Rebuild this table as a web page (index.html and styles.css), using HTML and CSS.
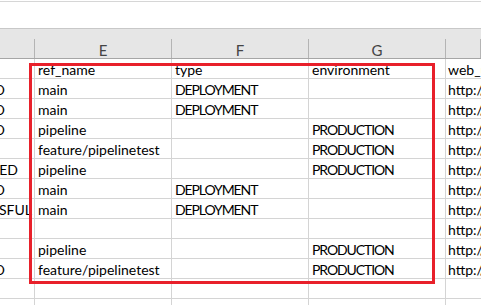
FILE: index.html
```html
<!DOCTYPE html>
<html lang="en">
<head>
    <meta charset="UTF-8">
    <title>deployments.xlsx</title>
    <link rel="stylesheet" href="styles.css">
</head>
<body>

<div class="sheet">
    <div class="formula-strip"></div>

    <div class="col-heads">
        <div class="head"></div>
        <div class="head">E</div>
        <div class="head">F</div>
        <div class="head">G</div>
        <div class="head"></div>
    </div>

    <div class="row">
        <div class="cell cut"></div>
        <div class="cell">ref_name</div>
        <div class="cell">type</div>
        <div class="cell">environment</div>
        <div class="cell">web_url</div>
    </div>
    <div class="row">
        <div class="cell cut end-d">SUCCEEDED</div>
        <div class="cell">main</div>
        <div class="cell caps">DEPLOYMENT</div>
        <div class="cell"></div>
        <div class="cell">http://</div>
    </div>
    <div class="row">
        <div class="cell cut end-d">SUCCEEDED</div>
        <div class="cell">main</div>
        <div class="cell caps">DEPLOYMENT</div>
        <div class="cell"></div>
        <div class="cell">http://</div>
    </div>
    <div class="row">
        <div class="cell cut end-d">SUCCEEDED</div>
        <div class="cell">pipeline</div>
        <div class="cell"></div>
        <div class="cell caps">PRODUCTION</div>
        <div class="cell">http://</div>
    </div>
    <div class="row">
        <div class="cell cut"></div>
        <div class="cell">feature/pipelinetest</div>
        <div class="cell"></div>
        <div class="cell caps">PRODUCTION</div>
        <div class="cell">http://</div>
    </div>
    <div class="row">
        <div class="cell cut end-ed">FAILED</div>
        <div class="cell">pipeline</div>
        <div class="cell"></div>
        <div class="cell caps">PRODUCTION</div>
        <div class="cell">http://</div>
    </div>
    <div class="row">
        <div class="cell cut end-d">SUCCEEDED</div>
        <div class="cell">main</div>
        <div class="cell caps">DEPLOYMENT</div>
        <div class="cell"></div>
        <div class="cell">http://</div>
    </div>
    <div class="row">
        <div class="cell cut">UNSUCCESSFUL</div>
        <div class="cell">main</div>
        <div class="cell caps">DEPLOYMENT</div>
        <div class="cell"></div>
        <div class="cell">http://</div>
    </div>
    <div class="row">
        <div class="cell cut"></div>
        <div class="cell"></div>
        <div class="cell"></div>
        <div class="cell"></div>
        <div class="cell">http://</div>
    </div>
    <div class="row">
        <div class="cell cut"></div>
        <div class="cell">pipeline</div>
        <div class="cell"></div>
        <div class="cell caps">PRODUCTION</div>
        <div class="cell">http://</div>
    </div>
    <div class="row">
        <div class="cell cut end-d">SUCCEEDED</div>
        <div class="cell">feature/pipelinetest</div>
        <div class="cell"></div>
        <div class="cell caps">PRODUCTION</div>
        <div class="cell">http://</div>
    </div>
    <div class="row">
        <div class="cell cut"></div>
        <div class="cell"></div>
        <div class="cell"></div>
        <div class="cell"></div>
        <div class="cell"></div>
    </div>
    <div class="row">
        <div class="cell cut"></div>
        <div class="cell"></div>
        <div class="cell"></div>
        <div class="cell"></div>
        <div class="cell"></div>
    </div>

    <!-- annotation drawn over the selection -->
    <div class="highlight"></div>
</div>

</body>
</html>
```

FILE: styles.css
```css
body, html {
    margin: 0;
    padding: 0;
    background: #fff;
    overflow: hidden;
}

.sheet {
    position: relative;
    font-family: Lato, "Open Sans", sans-serif;
    font-size: 14px;
    color: #000;
}

.formula-strip {
    margin-top: 1px;
    height: 28px;
    box-sizing: border-box;
    border-top: 1px solid #d6d6d6;
    border-bottom: 1px solid #c8c8c8;
    background: #fff;
}

.col-heads,
.row {
    display: grid;
    grid-template-columns: 35px 137px 137px 137px 1fr;
}

.col-heads {
    background: #e6e6e6;
    padding-top: 10px;
    border-bottom: 1px solid #a6a6a6;
}

.head {
    height: 19px;
    box-sizing: border-box;
    border-right: 1px solid #b4b4b4;
    text-align: center;
    color: #444;
    font-size: 15px;
    line-height: 19px;
    padding-top: 2px;
}

.row {
    height: 20px;
}

.cell {
    box-sizing: border-box;
    height: 20px;
    border-right: 1px solid #d4d4d4;
    border-bottom: 1px solid #d4d4d4;
    padding-left: 3px;
    line-height: 19px;
    padding-top: 1px;
    white-space: nowrap;
    overflow: hidden;
}

.caps {
    letter-spacing: -1.1px;
}

.row .cell:last-child {
    padding-left: 2px;
    border-right: none;
}

/* column D only shows the tail of its text */
.cut {
    display: flex;
    justify-content: flex-end;
    padding-left: 0;
    padding-right: 2px;
}

.cut.end-d {
    padding-right: 29px;
}

.cut.end-ed {
    padding-right: 16px;
}

.highlight {
    position: absolute;
    left: 29px;
    top: 62px;
    width: 406px;
    height: 221px;
    box-sizing: border-box;
    border: 3px solid #e8202a;
}
```
